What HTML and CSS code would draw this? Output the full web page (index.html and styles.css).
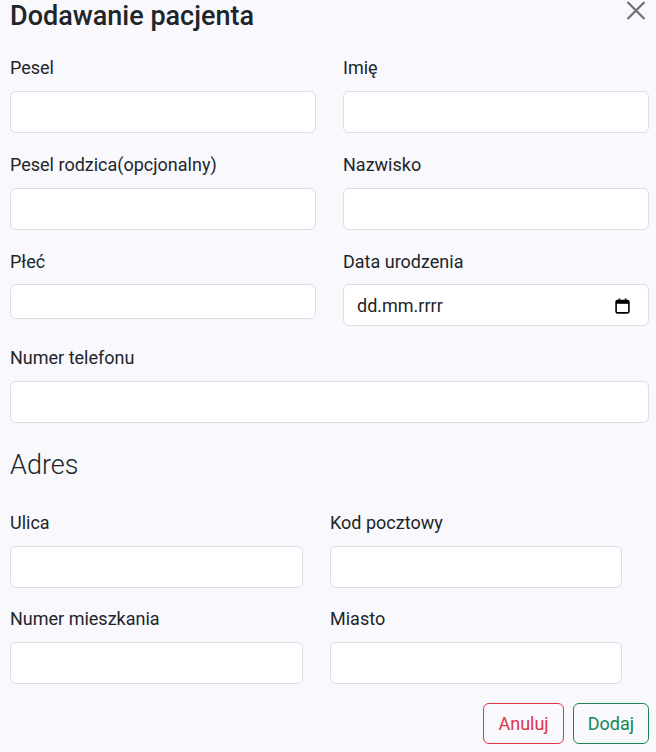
FILE: index.html
```html
<!DOCTYPE html>
<html lang="pl">
<head>
<meta charset="utf-8">
<title>Dodawanie pacjenta</title>
<link rel="stylesheet" href="styles.css">
</head>
<body>
<div class="modal">
  <div class="header">
    <h1 class="title">Dodawanie pacjenta</h1>
    <button class="close" aria-label="Zamknij">
      <svg width="20" height="19" viewBox="0 0 20 19"><path d="M1.5 1 L18.5 18 M18.5 1 L1.5 18" stroke="#6f6f73" stroke-width="2.2" fill="none"/></svg>
    </button>
  </div>

  <div class="grid main">
    <div class="field"><label>Pesel</label><input class="input" type="text"></div>
    <div class="field"><label>Imię</label><input class="input" type="text"></div>
    <div class="field"><label>Pesel rodzica(opcjonalny)</label><input class="input" type="text"></div>
    <div class="field"><label>Nazwisko</label><input class="input" type="text"></div>
    <div class="field top"><label>Płeć</label><input class="input short" type="text"></div>
    <div class="field"><label>Data urodzenia</label>
      <div class="input date"><span>dd.mm.rrrr</span>
        <svg width="15" height="16" viewBox="0 0 15 16"><rect x="1.1" y="2.6" width="12.8" height="12.3" rx="1.3" fill="none" stroke="#000" stroke-width="1.6"/><rect x="1" y="2.5" width="13" height="3.3" fill="#000"/><rect x="3.6" y="0.5" width="1.6" height="3" fill="#000"/><rect x="9.8" y="0.5" width="1.6" height="3" fill="#000"/></svg>
      </div>
    </div>
    <div class="field wide"><label>Numer telefonu</label><input class="input" type="text"></div>
  </div>

  <h2 class="section">Adres</h2>

  <div class="grid address">
    <div class="field"><label>Ulica</label><input class="input" type="text"></div>
    <div class="field"><label>Kod pocztowy</label><input class="input" type="text"></div>
    <div class="field"><label>Numer mieszkania</label><input class="input" type="text"></div>
    <div class="field"><label>Miasto</label><input class="input" type="text"></div>
  </div>

  <div class="actions">
    <button class="btn btn-cancel">Anuluj</button>
    <button class="btn btn-add">Dodaj</button>
  </div>
</div>
</body>
</html>
```

FILE: styles.css
```css
html, body {
  margin: 0;
  padding: 0;
  background: #f8f8fd;
}
body {
  font-family: Roboto, "Liberation Sans", sans-serif;
  color: #212529;
  font-size: 18px;
}
.modal {
  padding: 2px 7px 0 10px;
  width: 639px;
}
.header {
  display: flex;
  justify-content: space-between;
  align-items: flex-start;
  height: 29px;
}
.title {
  margin: 0;
  font-size: 27px;
  font-weight: 500;
  line-height: 29px;
}
.close {
  background: none;
  border: 0;
  padding: 0;
  margin: -1px 3px 0 0;
  width: 20px;
  height: 19px;
  display: block;
}
.close svg { display: block; }

.grid {
  display: grid;
  column-gap: 27px;
}
.main {
  margin-top: 26px;
  grid-template-columns: 306px 306px;
  row-gap: 21px;
}
.address {
  grid-template-columns: 293px 292px;
  row-gap: 20px;
}
.field {
  display: flex;
  flex-direction: column;
}
.field.top { align-self: start; }
.field.wide { grid-column: 1 / span 2; }
.field label {
  line-height: 22px;
  margin-bottom: 12px;
}
.field.top label,
.field.top + .field label { margin-bottom: 11px; }
.input {
  box-sizing: border-box;
  height: 42px;
  width: 100%;
  margin: 0;
  border: 1px solid #dedde6;
  border-radius: 6px;
  background: #fff;
  font: inherit;
  padding: 0 12px;
  outline: none;
}
.input.short { height: 35px; }
.date {
  display: flex;
  align-items: center;
  justify-content: space-between;
  padding: 0 18px 0 13px;
  font-size: 18px;
  color: #212529;
}
.date svg { display: block; margin-top: 1px; }

.section {
  margin: 27px 0 31px;
  font-size: 27px;
  font-weight: 300;
  line-height: 31px;
}

.actions {
  display: flex;
  justify-content: flex-end;
  gap: 9px;
  margin-top: 19px;
}
.btn {
  font: inherit;
  font-size: 18px;
  line-height: 27px;
  padding: 6px 14px;
  border-radius: 6px;
  background: transparent;
  cursor: pointer;
}
.btn-cancel {
  color: #dc3545;
  border: 1px solid #dc3545;
}
.btn-add {
  color: #198754;
  border: 1px solid #198754;
}
```
